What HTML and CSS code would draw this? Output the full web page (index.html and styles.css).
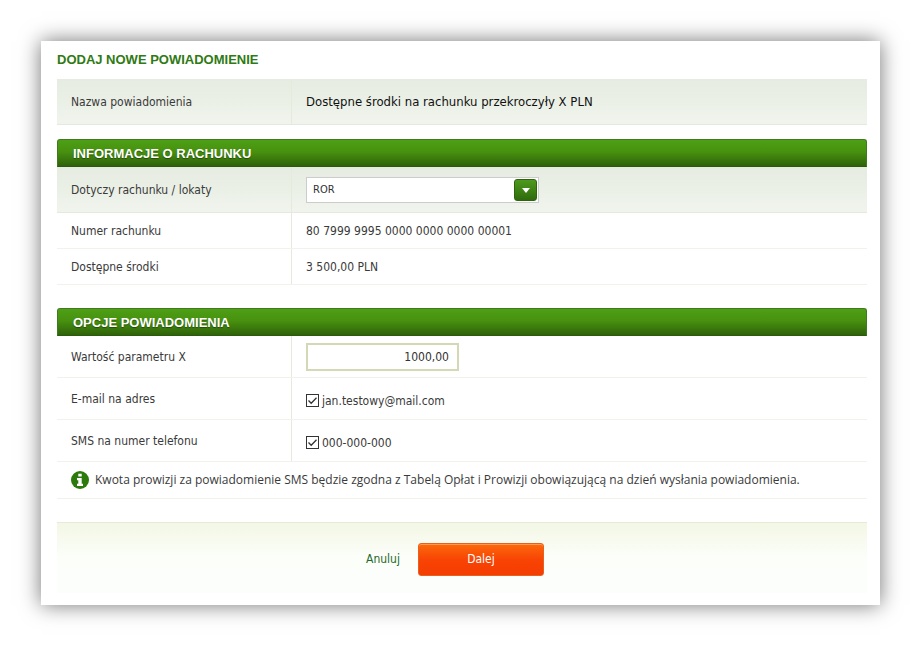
FILE: index.html
```
<!DOCTYPE html>
<html lang="pl">
<head>
  <meta charset="UTF-8">
  <meta name="viewport" content="width=device-width, initial-scale=1">
  <title>Dodaj nowe powiadomienie</title>
  <link rel="stylesheet" href="styles.css">
</head>
<body>

<main class="card">
  <h1>DODAJ NOWE POWIADOMIENIE</h1>

  <form>
    <!-- NAME -->
    <div class="row row-tall row-shaded row-name">
      <span class="label">Nazwa powiadomienia</span>
      <span class="value value-name">Dostępne środki na rachunku przekroczyły X PLN</span>
    </div>

    <!-- ACCOUNT -->
    <section>
      <h2>INFORMACJE O RACHUNKU</h2>
      <div class="row row-tall row-shaded">
        <label class="label" for="account">Dotyczy rachunku / lokaty</label>
        <div class="value">
          <div class="select">
            <select id="account" name="account">
              <option>ROR</option>
            </select>
            <span class="select-arrow">
              <svg width="8" height="5" viewBox="0 0 8 5"><path d="M0 0h8L4 5z" fill="#fff"/></svg>
            </span>
          </div>
        </div>
      </div>
      <div class="row row-short">
        <span class="label">Numer rachunku</span>
        <span class="value">80 7999 9995 0000 0000 0000 00001</span>
      </div>
      <div class="row row-short">
        <span class="label">Dostępne środki</span>
        <span class="value">3 500,00 PLN</span>
      </div>
    </section>

    <!-- OPTIONS -->
    <section>
      <h2>OPCJE POWIADOMIENIA</h2>
      <div class="row">
        <label class="label" for="amount">Wartość parametru X</label>
        <div class="value"><input type="text" class="amount" id="amount" name="amount" value="1000,00"></div>
      </div>
      <div class="row">
        <span class="label">E-mail na adres</span>
        <div class="value value-check">
          <input type="checkbox" id="email" name="email" checked>
          <label for="email">jan.testowy@mail.com</label>
        </div>
      </div>
      <div class="row">
        <span class="label">SMS na numer telefonu</span>
        <div class="value value-check">
          <input type="checkbox" id="sms" name="sms" checked>
          <label for="sms">000-000-000</label>
        </div>
      </div>
      <div class="note">
        <svg width="18" height="18" viewBox="0 0 18 18">
          <circle cx="9" cy="9" r="9" fill="#2b7a0b"/>
          <path d="M7.3 2.8h3.4v2.7H7.3zM6 7h4.7v5.7H12V15H6v-2.3h1.3V9.2H6z" fill="#fff"/>
        </svg>
        <p>Kwota prowizji za powiadomienie SMS będzie zgodna z Tabelą Opłat i Prowizji obowiązującą na dzień wysłania powiadomienia.</p>
      </div>
    </section>

    <!-- BUTTONS -->
    <div class="actions">
      <a href="#">Anuluj</a>
      <button type="submit">Dalej</button>
    </div>
  </form>
</main>

</body>
</html>
```
FILE: styles.css
```
* { box-sizing: border-box; }

body {
  margin: 0;
  padding: 41px;
  background: #fff;
  color: #3a3a3a;
  font-family: Tahoma, "DejaVu Sans Condensed", "Open Sans", sans-serif;
  font-size: 12px;
  line-height: 16px;
}

.card {
  padding: 9px 13px 12px 16px;
  background: #fff;
  box-shadow: 0 0 20px rgba(0, 0, 0, 0.55);
}

h1, h2 {
  margin: 0;
  font-family: Arial, "Liberation Sans", sans-serif;
  font-size: 13px;
}

h1 {
  margin-bottom: 9px;
  color: #2f7a14;
  line-height: 20px;
}

h2 {
  padding: 1px 15px 0;
  border: 1px solid #3f7a20;
  border-bottom-color: #2c5a0c;
  border-radius: 3px 3px 0 0;
  background: linear-gradient(#4e9f16, #47910f 45%, #2f620a);
  color: #fff;
  line-height: 25px;
  text-shadow: 0 1px 1px rgba(0, 0, 0, 0.4);
}

section { margin-bottom: 23px; }

/* --- Rows --- */
.row {
  display: grid;
  grid-template-columns: 235px 1fr;
  min-height: 42px;
  border-bottom: 1px solid #f1f1ee;
}
.row-tall { min-height: 46px; }
.row-short { min-height: 36px; }
.row-shaded {
  border-bottom-color: #e4e9df;
  background: linear-gradient(#e6ece1, #f0f4ed);
}
.row-name { margin-bottom: 14px; }

.label, .value {
  display: flex;
  align-items: center;
  padding: 1px 14px 0;
}
.label { border-right: 1px solid #e6e9dc; }
.value-name {
  color: #111;
  font-size: 13px;
}
.value-check {
  gap: 3px;
  padding-top: 4px;
}

/* --- Form controls --- */
.select {
  position: relative;
  width: 233px;
}
.select select {
  display: block;
  width: 100%;
  height: 26px;
  padding: 0 30px 0 6px;
  border: 1px solid #ccc;
  border-radius: 0;
  background: #fff;
  color: #333;
  font: inherit;
  font-size: 11px;
  appearance: none;
}
.select-arrow {
  position: absolute;
  top: 2px;
  right: 2px;
  display: flex;
  align-items: center;
  justify-content: center;
  width: 23px;
  height: 22px;
  border: 1px solid #2d6410;
  border-radius: 3px;
  background: linear-gradient(#4e9a1d, #2f6a0c);
  pointer-events: none;
}

.amount {
  width: 153px;
  height: 28px;
  padding: 0 8px;
  border: 2px solid #d2d9b4;
  color: #333;
  font: inherit;
  text-align: right;
}

input[type="checkbox"] {
  width: 13px;
  height: 13px;
  margin: 0;
  border: 1px solid #333;
  background: #fff;
  appearance: none;
}
input[type="checkbox"]:checked {
  background: #fff url("data:image/svg+xml,%3Csvg xmlns='http://www.w3.org/2000/svg' viewBox='0 0 11 11'%3E%3Cpath d='M1.5 5.5l2.7 2.8L9.5 2.8' fill='none' stroke='%23333' stroke-width='1.3'/%3E%3C/svg%3E");
}

.note {
  display: flex;
  align-items: center;
  gap: 6px;
  min-height: 37px;
  padding: 0 14px;
  border-bottom: 1px solid #f1f1ee;
  font-family: "Open Sans", sans-serif;
}
.note svg { flex: none; }
.note p { margin: 0; }

/* --- Buttons --- */
.actions {
  display: flex;
  align-items: center;
  justify-content: center;
  gap: 18px;
  min-height: 71px;
  padding: 2px 14px 0 0;
  border-top: 1px solid #e6eada;
  background: linear-gradient(#f3f7e4, #fcfefa 50%, #fcfefc);
}
.actions a {
  color: #1f6b2b;
  text-decoration: none;
}
.actions button {
  width: 126px;
  height: 33px;
  border: 1px solid #e8601c;
  border-radius: 3px;
  background: linear-gradient(#fb6a0c, #f84404 50%, #f53d02);
  box-shadow: inset 0 1px 0 #ff9a4d;
  color: #fff;
  font: inherit;
}
```
